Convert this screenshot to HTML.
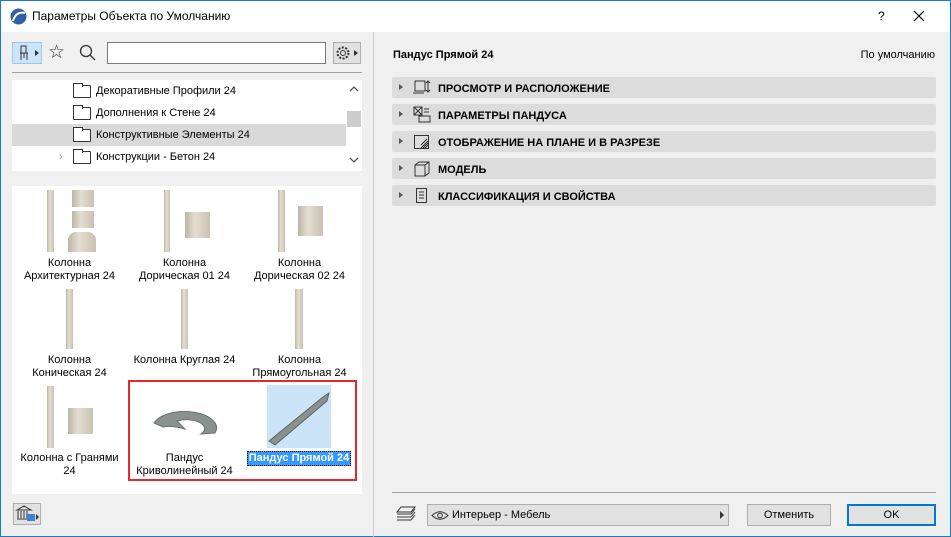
<!DOCTYPE html>
<html><head><meta charset="utf-8"><style>
*{margin:0;padding:0;box-sizing:border-box}
body{width:951px;height:537px;background:#f0f0f0;font-family:"Liberation Sans",sans-serif;font-size:11px;color:#000;position:relative;overflow:hidden;border:1px solid #1979ca}
.a{position:absolute}
.title{left:0;top:0;width:949px;height:31px;background:#fff}
.tree div.row{position:absolute;left:0;width:334px;height:22px;line-height:22px}
.folder{position:absolute;width:18px;height:13px;border:1px solid #333;border-radius:1px;background:#fff}
.folder:before{content:"";position:absolute;left:-1px;top:-3px;width:8px;height:3px;border:1px solid #333;border-bottom:none;background:#fff}
.lbl{position:absolute;text-align:center;width:115px;line-height:13px;font-size:11px}
.col{position:absolute;background:linear-gradient(90deg,#bdb5a6,#e4ded2 40%,#c9c1b2)}
.bar{position:absolute;left:391px;width:544px;height:21px;background:#dcdcdc;border-radius:2px;font-weight:bold;font-size:11px;line-height:22px}
.bar .tri{position:absolute;left:7px;top:7px;border-left:4px solid #555;border-top:3.5px solid transparent;border-bottom:3.5px solid transparent}
.bar span{position:absolute;left:46px;top:1px}
.bar svg{position:absolute;left:21px;top:2px}
.btn{position:absolute;background:#e1e1e1;border:1px solid #adadad;text-align:center;line-height:21px}
</style></head><body>
<div class="a title"></div>
<svg class="a" style="left:9px;top:7px" width="17" height="17" viewBox="0 0 17 17"><circle cx="8.5" cy="8.5" r="8" fill="#2f5fa8"/><path d="M3 13 Q6 3 15 5" stroke="#fff" stroke-width="2" fill="none"/></svg>
<div class="a" style="left:31px;top:8px;font-size:12px">Параметры Объекта по Умолчанию</div>
<div class="a" style="left:877px;top:8px;font-size:12px">?</div>
<svg class="a" style="left:912px;top:9px" width="12" height="12"><path d="M1 1l10 10M11 1L1 11" stroke="#000" stroke-width="1.2"/></svg>

<!-- toolbar -->
<div class="a" style="left:11px;top:41px;width:30px;height:22px;background:#cce4f7;border:1px solid #99c9ef"></div>
<svg class="a" style="left:15px;top:43px" width="26" height="18"><path d="M5 2h5v7H5zM4 9h8M5 9v7M11 9v7M8 9v5" stroke="#333" fill="none"/><path d="M19 6l4 3-4 3z" fill="#333"/></svg>
<div class="a" style="left:47px;top:40px;font-size:19px;color:#333">☆</div>
<svg class="a" style="left:78px;top:43px" width="18" height="18"><circle cx="7" cy="7" r="5.5" stroke="#333" fill="none" stroke-width="1.3"/><path d="M11 11l5 5" stroke="#333" stroke-width="1.3"/></svg>
<div class="a" style="left:106px;top:41px;width:219px;height:22px;background:#fff;border:1px solid #7a7a7a"></div>
<div class="a" style="left:332px;top:41px;width:28px;height:22px;background:#e1e1e1;border:1px solid #adadad"></div>
<svg class="a" style="left:334px;top:44px" width="26" height="17"><circle cx="8" cy="8" r="5.5" stroke="#333" fill="none" stroke-dasharray="2 1.5" stroke-width="2"/><circle cx="8" cy="8" r="2.5" stroke="#333" fill="none"/><path d="M19 5l4 3-4 3z" fill="#333"/></svg>
<div class="a" style="left:11px;top:71px;width:350px;height:1px;background:#a0a0a0"></div>

<!-- tree -->
<div class="a tree" style="left:11px;top:79px;width:334px;height:91px;background:#fff">
<div class="row" style="top:0"><div class="folder" style="left:61px;top:5px"></div><span style="position:absolute;left:84px">Декоративные Профили 24</span></div>
<div class="row" style="top:22px"><div class="folder" style="left:61px;top:5px"></div><span style="position:absolute;left:84px">Дополнения к Стене 24</span></div>
<div class="row" style="top:44px;background:#d9d9d9"><div class="folder" style="left:61px;top:5px"></div><span style="position:absolute;left:84px">Конструктивные Элементы 24</span></div>
<div class="row" style="top:66px"><span style="position:absolute;left:47px;color:#999">›</span><div class="folder" style="left:61px;top:5px"></div><span style="position:absolute;left:84px">Конструкции - Бетон 24</span></div>
</div>
<div class="a" style="left:345px;top:79px;width:16px;height:91px;background:#fff"></div>
<div class="a" style="left:346px;top:110px;width:14px;height:16px;background:#cdcdcd"></div>
<svg class="a" style="left:348px;top:84px" width="10" height="8"><path d="M1 6l4-4 4 4" stroke="#555" fill="none" stroke-width="1.3"/></svg>
<svg class="a" style="left:348px;top:155px" width="10" height="8"><path d="M1 2l4 4 4-4" stroke="#555" fill="none" stroke-width="1.3"/></svg>

<!-- grid -->
<div class="a" style="left:11px;top:185px;width:350px;height:308px;background:#fff"></div>
<div class="col a" style="left:46px;top:189px;width:7px;height:62px"></div>
<div class="col a" style="left:71px;top:189px;width:22px;height:17px"></div>
<div class="col a" style="left:71px;top:210px;width:22px;height:17px"></div>
<div class="col a" style="left:67px;top:231px;width:28px;height:20px;border-radius:8px 8px 0 0"></div>
<div class="col a" style="left:163px;top:189px;width:6px;height:62px"></div>
<div class="col a" style="left:184px;top:211px;width:25px;height:26px"></div>
<div class="col a" style="left:277px;top:189px;width:7px;height:62px"></div>
<div class="col a" style="left:297px;top:205px;width:25px;height:30px"></div>
<div class="col a" style="left:65px;top:288px;width:7px;height:60px"></div>
<div class="col a" style="left:180px;top:288px;width:7px;height:60px"></div>
<div class="col a" style="left:294px;top:288px;width:8px;height:60px"></div>
<div class="col a" style="left:46px;top:385px;width:7px;height:62px"></div>
<div class="col a" style="left:67px;top:407px;width:25px;height:26px"></div>
<div class="lbl" style="left:11px;top:256px">Колонна<br>Архитектурная 24</div>
<div class="lbl" style="left:126px;top:256px">Колонна<br>Дорическая 01 24</div>
<div class="lbl" style="left:241px;top:256px">Колонна<br>Дорическая 02 24</div>
<div class="lbl" style="left:11px;top:353px">Колонна<br>Коническая 24</div>
<div class="lbl" style="left:126px;top:353px">Колонна Круглая 24</div>
<div class="lbl" style="left:241px;top:353px">Колонна<br>Прямоугольная 24</div>
<div class="lbl" style="left:11px;top:451px">Колонна с Гранями<br>24</div>
<div class="a" style="left:127px;top:379px;width:229px;height:101px;border:2px solid #e8262b"></div>
<svg class="a" style="left:150px;top:402px" width="68" height="36"><path d="M3 20 A31 16 0 0 1 64 30 L50 31 A18 9 0 0 0 26 18 L34 26 Q20 22 12 24 Z" fill="#8a9290" stroke="#6a716f"/></svg>
<div class="lbl" style="left:126px;top:451px">Пандус<br>Криволинейный 24</div>
<div class="a" style="left:266px;top:384px;width:64px;height:63px;background:#cce4f7"></div>
<svg class="a" style="left:266px;top:388px" width="64" height="58"><path d="M2 52 L56 8 L62 4 L60 12 L8 56 Z" fill="#8a9290" stroke="#5e6563"/></svg>
<div class="a" style="left:246px;top:450px;width:104px;height:15px;background:#3399ff;border:1px dotted #000"></div>
<div class="a" style="left:246px;top:451px;width:104px;text-align:center;color:#fff;font-weight:bold;line-height:13px">Пандус Прямой 24</div>

<div class="a" style="left:12px;top:502px;width:28px;height:22px;background:#e1e1e1;border:1px solid #adadad"></div>
<svg class="a" style="left:14px;top:504px" width="26" height="18"><path d="M2 5l7-4 7 4zM3 6v7M6 6v7M9 6v7M12 6v7M2 14h13" stroke="#333" fill="none"/><rect x="12" y="9" width="8" height="7" fill="#3a86d4"/><path d="M21 9l3 3-3 3z" fill="#333"/></svg>

<!-- divider -->
<div class="a" style="left:372px;top:31px;width:1px;height:505px;background:#c8c8c8"></div>

<!-- right -->
<div class="a" style="left:392px;top:48px;font-weight:bold;font-size:11px">Пандус Прямой 24</div>
<div class="a" style="right:15px;top:48px">По умолчанию</div>
<div class="bar" style="top:76px"><div class="tri"></div><svg width="18" height="17"><rect x="2" y="2" width="10" height="10" fill="none" stroke="#333"/><path d="M0 14h11M15 2v11M13 4l2-2 2 2M13 11l2 2 2-2" stroke="#333" fill="none"/></svg><span>ПРОСМОТР И РАСПОЛОЖЕНИЕ</span></div>
<div class="bar" style="top:103px"><div class="tri"></div><svg width="18" height="17"><rect x="1" y="1" width="8" height="8" fill="none" stroke="#333"/><path d="M1 1l8 8M9 1l-8 8M11 3h5M11 6h5" stroke="#333"/><rect x="6" y="10" width="11" height="6" fill="none" stroke="#333"/></svg><span>ПАРАМЕТРЫ ПАНДУСА</span></div>
<div class="bar" style="top:130px"><div class="tri"></div><svg width="18" height="17"><rect x="1.5" y="2.5" width="14" height="13" fill="none" stroke="#333"/><path d="M8 15l7-7M10 15l5-5M12 15l3-3M8 12l6-6" stroke="#333"/></svg><span>ОТОБРАЖЕНИЕ НА ПЛАНЕ И В РАЗРЕЗЕ</span></div>
<div class="bar" style="top:157px"><div class="tri"></div><svg width="18" height="17"><path d="M2 5l4-3h10v11l-4 3H2zM2 5h10v11M12 5l4-3" stroke="#333" fill="none"/></svg><span>МОДЕЛЬ</span></div>
<div class="bar" style="top:184px"><div class="tri"></div><svg width="18" height="17"><rect x="3.5" y="1.5" width="10" height="14" fill="none" stroke="#333"/><path d="M6 5h5M6 8h5M6 11h5" stroke="#333"/></svg><span>КЛАССИФИКАЦИЯ И СВОЙСТВА</span></div>

<div class="a" style="left:391px;top:491px;width:544px;height:1px;background:#a0a0a0"></div>
<svg class="a" style="left:393px;top:504px" width="24" height="18"><path d="M7 2h14l-4 5H3zM3 9h14l4-5M3 12h14l4-5M3 15h14l4-5" stroke="#333" fill="none"/></svg>
<div class="btn" style="left:426px;top:503px;width:302px;height:22px;text-align:left;padding-left:24px">Интерьер - Мебель</div>
<svg class="a" style="left:430px;top:509px" width="20" height="11"><path d="M1 5.5Q9 -2 17 5.5Q9 13 1 5.5z" stroke="#333" fill="none"/><circle cx="9" cy="5.5" r="2.3" stroke="#333" fill="none"/></svg>
<div class="a" style="left:719px;top:510px;border-left:4px solid #333;border-top:4px solid transparent;border-bottom:4px solid transparent"></div>
<div class="btn" style="left:746px;top:503px;width:84px;height:22px">Отменить</div>
<div class="btn" style="left:846px;top:503px;width:89px;height:22px;border:2px solid #0078d7;line-height:19px">OK</div>
</body></html>
